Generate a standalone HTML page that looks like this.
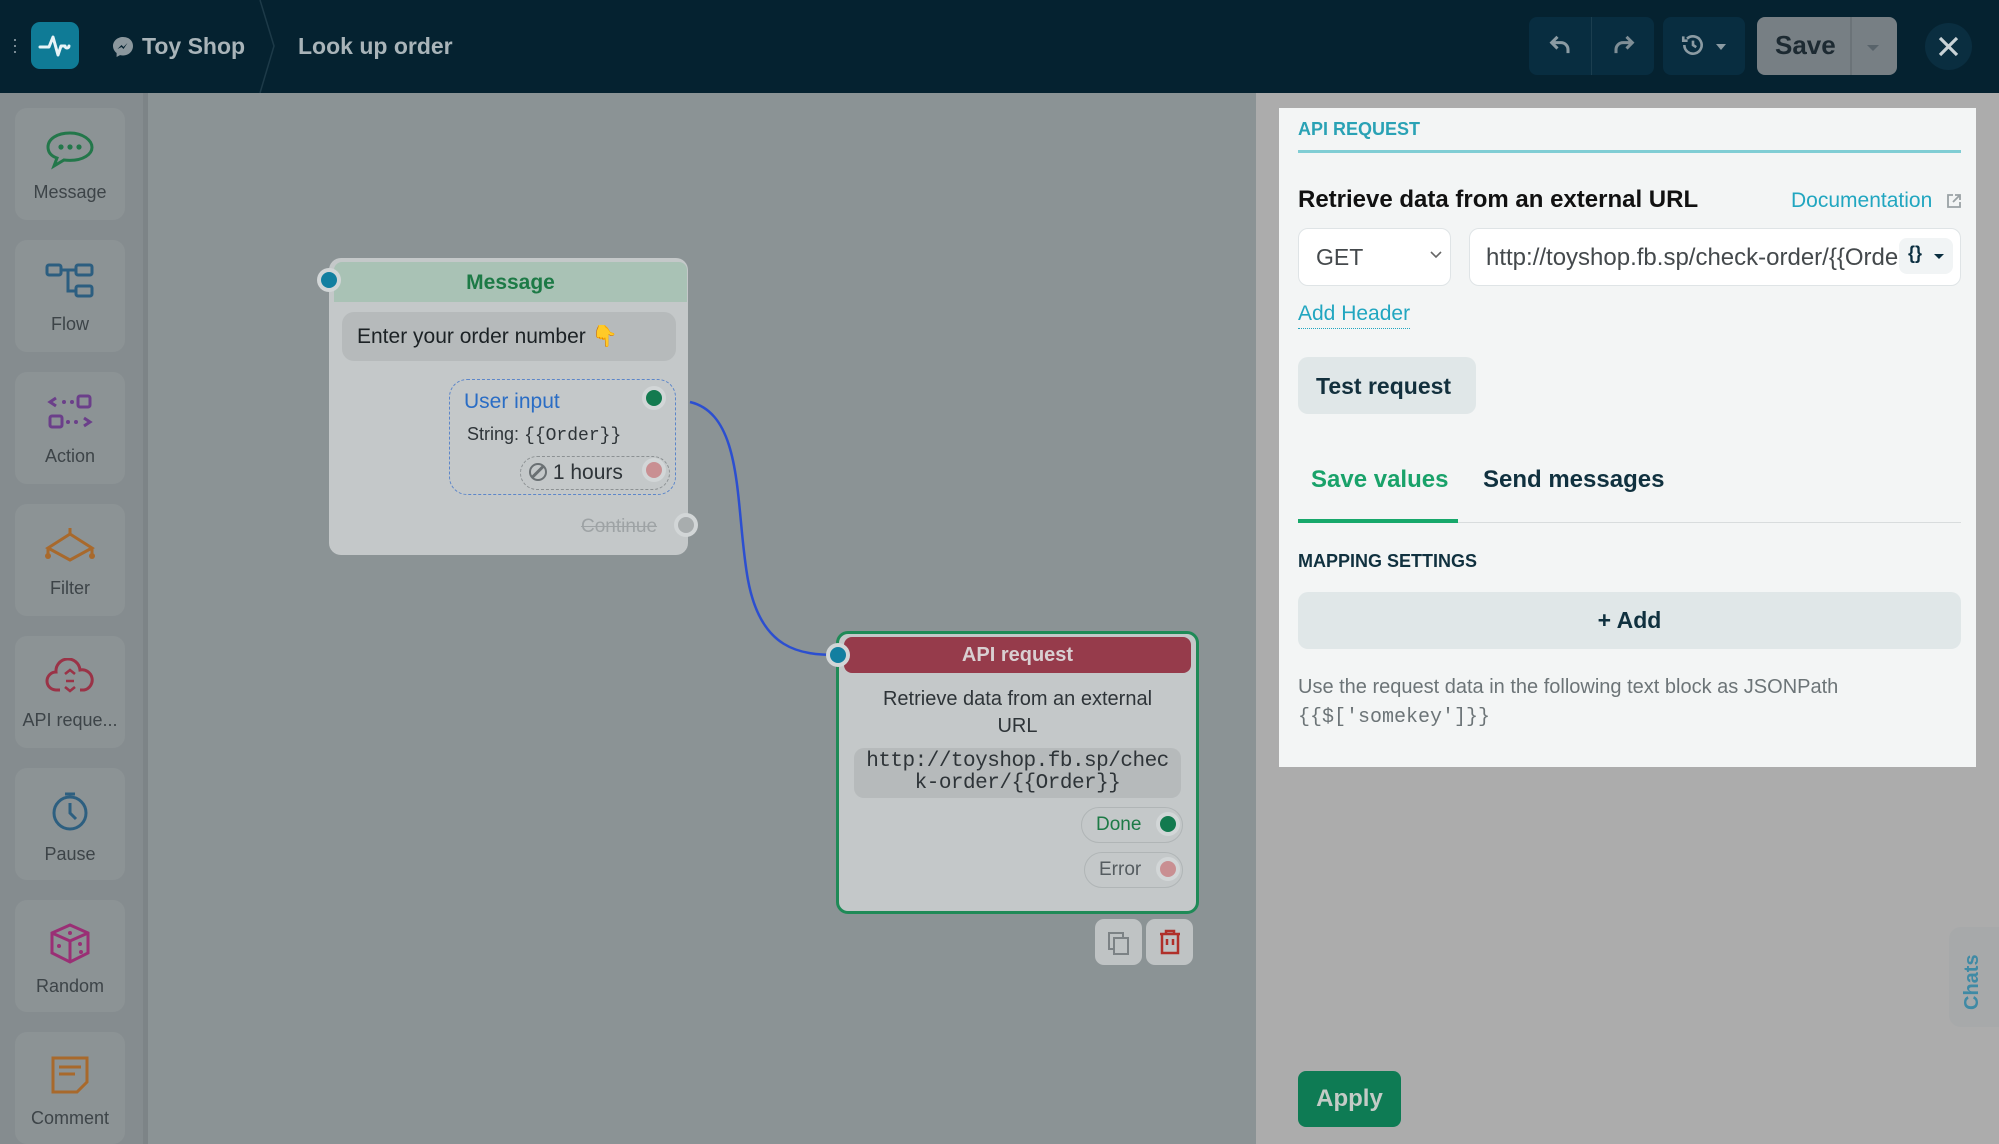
<!DOCTYPE html>
<html><head><meta charset="utf-8"><style>
*{box-sizing:border-box;margin:0;padding:0}
body{width:1999px;height:1144px;overflow:hidden;position:relative;font-family:"Liberation Sans",sans-serif;background:#8b9395}
.abs{position:absolute}
.hdr{left:0;top:0;width:1999px;height:93px;background:#052230}
.side{left:0;top:93px;width:148px;height:1051px;background:#858c8f;border-right:5px solid #7d8487}
.card{position:absolute;left:15px;width:110px;height:112px;background:#8c9395;border-radius:12px;text-align:center;color:#3d4448;font-size:18px}
.card svg{display:block;margin:22px auto 12px}
.node{background:#c4c8c9;border-radius:12px}
.port{position:absolute;width:24px;height:24px;border-radius:50%;background:#d2d6d7}
.port i{position:absolute;left:4px;top:4px;width:16px;height:16px;border-radius:50%}
.pill{position:absolute;border:1px solid #b0b5b6;border-radius:18px;font-size:19px;padding:6px 0 0 14px}
</style></head><body>
<div class="abs hdr"></div>
<div class="abs" style="left:12px;top:36px;color:#8a9aa3;font-size:18px;line-height:6px">·<br>·<br>·</div>
<div class="abs" style="left:31px;top:22px;width:48px;height:47px;border-radius:9px;background:#0f7b96">
<svg width="48" height="47" viewBox="0 0 48 47"><path d="M9 25h9l4-10 5 18 3-9 h4 a2 2 0 1 0 4 0" fill="none" stroke="#e8f4f7" stroke-width="3" stroke-linejoin="round" stroke-linecap="round"/></svg></div>
<svg class="abs" style="left:111px;top:35px" width="24" height="24" viewBox="0 0 24 24"><path d="M12 2C6.5 2 2 6 2 11c0 2.8 1.4 5.3 3.6 7V22l3.4-1.9c1 .3 2 .4 3 .4 5.5 0 10-4 10-9.5S17.5 2 12 2z" fill="#8b979d"/><path d="M6.5 14l4-4 2 2 4-4-4 6-2-2z" fill="#052230"/></svg>
<div class="abs" style="left:142px;top:33px;color:#a9b4b9;font-size:23px;font-weight:bold">Toy Shop</div>
<svg class="abs" style="left:258px;top:0" width="20" height="93"><path d="M2 0 L16 46 L2 93" stroke="#1d3a48" stroke-width="1.5" fill="none"/></svg>
<div class="abs" style="left:298px;top:33px;color:#a9b4b9;font-size:23px;font-weight:bold">Look up order</div>
<div class="abs" style="left:1529px;top:17px;width:125px;height:58px;background:#082d40;border-radius:8px"></div>
<div class="abs" style="left:1591px;top:17px;width:1px;height:58px;background:#1b3e4f"></div>
<svg class="abs" style="left:1547px;top:31px" width="28" height="28" viewBox="0 0 24 24"><path d="M9 5L4 10l5 5M4 10h8a6 6 0 0 1 6 6v3" fill="none" stroke="#8b9ba3" stroke-width="2.6"/></svg>
<svg class="abs" style="left:1609px;top:31px" width="28" height="28" viewBox="0 0 24 24"><path d="M15 5l5 5-5 5M20 10h-8a6 6 0 0 0-6 6v3" fill="none" stroke="#7f8e96" stroke-width="2.6"/></svg>
<div class="abs" style="left:1663px;top:17px;width:82px;height:58px;background:#082d40;border-radius:8px"></div>
<svg class="abs" style="left:1680px;top:32px" width="26" height="26" viewBox="0 0 24 24"><path d="M4 12a8 8 0 1 0 2.5-5.8M3 4v4h4M12 8v4l3 2" fill="none" stroke="#8b9ba3" stroke-width="2.4"/></svg>
<div class="abs" style="left:1716px;top:44px;border:5px solid transparent;border-top:6px solid #8b9ba3"></div>
<div class="abs" style="left:1757px;top:17px;width:140px;height:58px;background:#777f84;border-radius:8px"></div>
<div class="abs" style="left:1850px;top:17px;width:2px;height:58px;background:#6b7378"></div>
<div class="abs" style="left:1775px;top:30px;color:#1d2a32;font-size:26px;font-weight:bold">Save</div>
<div class="abs" style="left:1867px;top:45px;border:6px solid transparent;border-top:6px solid #58636a"></div>
<div class="abs" style="left:1925px;top:23px;width:47px;height:47px;border-radius:50%;background:#0a2e40"></div>
<svg class="abs" style="left:1936px;top:34px" width="25" height="25"><path d="M4 4L21 21M21 4L4 21" stroke="#c9d2d6" stroke-width="3.2"/></svg>

<div class="abs side"></div>
<div class="card" style="top:108px"><svg width="52" height="40" viewBox="0 0 52 40"><path d="M26 3C13 3 4 9 4 17c0 5 3 9 9 11l-3 8 10-6c2 .3 4 .4 6 .4 13 0 22-6 22-13S39 3 26 3z" fill="none" stroke="#23774a" stroke-width="3"/><circle cx="17" cy="17" r="2.6" fill="#23774a"/><circle cx="26" cy="17" r="2.6" fill="#23774a"/><circle cx="35" cy="17" r="2.6" fill="#23774a"/></svg>Message</div>
<div class="card" style="top:240px"><svg width="52" height="40" viewBox="0 0 52 40"><rect x="3" y="3" width="14" height="10" rx="2" fill="none" stroke="#2c5e80" stroke-width="3"/><rect x="32" y="3" width="16" height="10" rx="2" fill="none" stroke="#2c5e80" stroke-width="3"/><rect x="32" y="24" width="16" height="10" rx="2" fill="none" stroke="#2c5e80" stroke-width="3"/><path d="M17 8h15M24 8v21h8" fill="none" stroke="#2c5e80" stroke-width="3"/></svg>Flow</div>
<div class="card" style="top:372px"><svg width="52" height="40" viewBox="0 0 52 40"><path d="M12 4L6 8l6 4" fill="none" stroke="#6b3f8a" stroke-width="3"/><circle cx="20" cy="8" r="2" fill="#6b3f8a"/><circle cx="28" cy="8" r="2" fill="#6b3f8a"/><rect x="34" y="2" width="12" height="11" rx="2" fill="none" stroke="#6b3f8a" stroke-width="3"/><rect x="6" y="22" width="12" height="11" rx="2" fill="none" stroke="#6b3f8a" stroke-width="3"/><circle cx="24" cy="28" r="2" fill="#6b3f8a"/><circle cx="32" cy="28" r="2" fill="#6b3f8a"/><path d="M40 24l6 4-6 4" fill="none" stroke="#6b3f8a" stroke-width="3"/></svg>Action</div>
<div class="card" style="top:504px"><svg width="60" height="40" viewBox="0 0 60 40"><path d="M30 2v6M30 8L8 22 30 34 52 22zM8 22v8M52 22v8" fill="none" stroke="#a8692c" stroke-width="3"/><circle cx="8" cy="30" r="3" fill="#a8692c"/><circle cx="52" cy="30" r="3" fill="#a8692c"/></svg>Filter</div>
<div class="card" style="top:636px"><svg width="52" height="40" viewBox="0 0 52 40"><path d="M16 32h-4a9 9 0 0 1 0-18 12 12 0 0 1 24-2 9 9 0 0 1 4 20h-4" fill="none" stroke="#9a3347" stroke-width="3"/><path d="M21 16l5-4 5 4M22 23h8M21 29l5 4 5-4" fill="none" stroke="#9a3347" stroke-width="2.6"/></svg>API reque...</div>
<div class="card" style="top:768px"><svg width="52" height="42" viewBox="0 0 52 42"><circle cx="26" cy="23" r="16" fill="none" stroke="#2d5f80" stroke-width="3"/><path d="M21 4h10M26 13v10l6 6" fill="none" stroke="#2d5f80" stroke-width="3"/></svg>Pause</div>
<div class="card" style="top:900px"><svg width="52" height="42" viewBox="0 0 52 42"><path d="M26 3L44 11v20L26 40 8 31V11zM8 11l18 8 18-8M26 19v21" fill="none" stroke="#9a2f75" stroke-width="3"/><circle cx="26" cy="11" r="2" fill="#9a2f75"/><circle cx="15" cy="24" r="2" fill="#9a2f75"/><circle cx="36" cy="22" r="2" fill="#9a2f75"/><circle cx="37" cy="30" r="2" fill="#9a2f75"/></svg>Random</div>
<div class="card" style="top:1032px"><svg width="52" height="42" viewBox="0 0 52 42"><path d="M9 4h34v24l-10 10H9z" fill="none" stroke="#a8692c" stroke-width="3"/><path d="M15 13h22M15 20h16" stroke="#a8692c" stroke-width="3"/></svg>Comment</div>

<svg class="abs" style="left:0;top:0" width="1256" height="1144"><path d="M690 402 C 745 415, 735 510, 748 580 S 800 655, 838 655" fill="none" stroke="#2c4fd0" stroke-width="2.5"/></svg>

<div class="abs node" style="left:329px;top:258px;width:359px;height:297px"></div>
<div class="abs" style="left:334px;top:262px;width:353px;height:40px;background:#a9c2b5;border-radius:8px 8px 0 0;text-align:center;color:#1d7a46;font-size:21px;font-weight:bold;padding-top:9px">Message</div>
<div class="port" style="left:317px;top:268px"><i style="background:#127fa0"></i></div>
<div class="abs" style="left:342px;top:312px;width:334px;height:49px;background:#b6babb;border-radius:12px;font-size:21px;color:#1c2225;padding:13px 15px">Enter your order number <span style="color:#c9a23a">👇</span></div>
<div class="abs" style="left:449px;top:379px;width:227px;height:116px;border:1px dashed #5c86c9;border-radius:18px"></div>
<div class="abs" style="left:464px;top:390px;color:#2a6dc5;font-size:21px">User input</div>
<div class="abs" style="left:467px;top:424px;color:#2e3438;font-size:18px">String: <span style="font-family:'Liberation Mono',monospace">{{Order}}</span></div>
<div class="abs" style="left:520px;top:456px;width:150px;height:34px;border:1px dashed #8c9193;border-radius:17px"></div>
<div class="abs" style="left:529px;top:461px;color:#2e3438;font-size:21px"><span style="display:inline-block;width:18px;height:18px;border:2.5px solid #6a7073;border-radius:50%;vertical-align:-2px;position:relative"><span style="position:absolute;left:5px;top:-1px;width:2.5px;height:16px;background:#6a7073;transform:rotate(45deg)"></span></span> 1 hours</div>
<div class="port" style="left:642px;top:386px"><i style="background:#137a4f"></i></div>
<div class="port" style="left:642px;top:458px"><i style="background:#c98f92"></i></div>
<div class="abs" style="left:581px;top:516px;color:#9ea3a5;font-size:19px;text-decoration:line-through">Continue</div>
<div class="port" style="left:674px;top:513px"><i style="background:#a8adae"></i></div>

<div class="abs node" style="left:836px;top:631px;width:363px;height:283px;border:3px solid #1f8a57"></div>
<div class="abs" style="left:844px;top:637px;width:347px;height:36px;background:#963b4b;border-radius:8px;text-align:center;color:#d9cfd1;font-size:20px;font-weight:bold;padding-top:7px">API request</div>
<div class="port" style="left:826px;top:643px"><i style="background:#127fa0"></i></div>
<div class="abs" style="left:844px;top:686px;width:347px;text-align:center;color:#2e3438;font-size:20px;line-height:27px">Retrieve data from an external<br>URL</div>
<div class="abs" style="left:854px;top:748px;width:327px;height:50px;background:#b6babb;border-radius:10px;text-align:center;font-family:'Liberation Mono',monospace;font-size:21px;color:#2e3438;line-height:22px;padding-top:3px;letter-spacing:-0.5px">http://toyshop.fb.sp/chec<br>k-order/{{Order}}</div>
<div class="pill" style="left:1081px;top:807px;width:102px;height:36px;color:#1d7a46">Done</div>
<div class="port" style="left:1156px;top:812px"><i style="background:#137a4f"></i></div>
<div class="pill" style="left:1084px;top:852px;width:99px;height:36px;color:#555c60">Error</div>
<div class="port" style="left:1156px;top:857px"><i style="background:#c98f92"></i></div>
<div class="abs" style="left:1095px;top:919px;width:47px;height:46px;background:#bfc3c4;border-radius:9px"></div>
<svg class="abs" style="left:1106px;top:930px" width="26" height="26"><rect x="3" y="3" width="14" height="16" fill="none" stroke="#7c8285" stroke-width="2"/><rect x="8" y="8" width="14" height="16" fill="#bfc3c4" stroke="#7c8285" stroke-width="2"/></svg>
<div class="abs" style="left:1146px;top:919px;width:47px;height:46px;background:#bfc3c4;border-radius:9px"></div>
<svg class="abs" style="left:1157px;top:929px" width="26" height="26"><path d="M3 5h20M9 5V2h8v3M5 5v19h16V5" fill="none" stroke="#b0302a" stroke-width="2.5"/><path d="M10 10v6M16 10v6" stroke="#b0302a" stroke-width="2.5"/></svg>

<div class="abs" style="left:1256px;top:93px;width:743px;height:1051px;background:#acacac"></div>
<div class="abs" style="left:1279px;top:108px;width:697px;height:659px;background:#f3f5f5"></div>
<div class="abs" style="left:1298px;top:119px;color:#2aa2b5;font-size:18px;font-weight:bold">API REQUEST</div>
<div class="abs" style="left:1298px;top:150px;width:663px;height:3px;background:#80cdd4"></div>
<div class="abs" style="left:1298px;top:186px;color:#111;font-size:24px;font-weight:bold">Retrieve data from an external URL</div>
<div class="abs" style="left:1791px;top:189px;color:#21a6c0;font-size:21px">Documentation</div>
<svg class="abs" style="left:1946px;top:193px" width="16" height="16"><path d="M7 2H2v12h12V9M9 2h5v5M14 2L7 9" fill="none" stroke="#9aa2a5" stroke-width="1.8"/></svg>
<div class="abs" style="left:1298px;top:228px;width:153px;height:58px;background:#fff;border:1px solid #dfe4e6;border-radius:10px;color:#44494c;font-size:23px;padding:15px 0 0 17px">GET</div>
<svg class="abs" style="left:1429px;top:250px" width="14" height="10"><path d="M2 2l5 5 5-5" fill="none" stroke="#666" stroke-width="1.6"/></svg>
<div class="abs" style="left:1469px;top:228px;width:492px;height:58px;background:#fff;border:1px solid #dfe4e6;border-radius:10px;color:#44494c;font-size:24px;padding:15px 0 0 16px;overflow:hidden;white-space:nowrap"><span style="display:inline-block;width:432px;overflow:hidden">http://toyshop.fb.sp/check-order/{{Order}}</span></div>
<div class="abs" style="left:1899px;top:238px;width:54px;height:36px;background:#f1f4f5;border-radius:8px;color:#0a2e40;font-size:18px;font-weight:bold;padding:5px 0 0 9px">{}</div>
<div class="abs" style="left:1934px;top:254px;border:5px solid transparent;border-top:5px solid #0a2e40"></div>
<div class="abs" style="left:1298px;top:302px;color:#21a6c0;font-size:21px;border-bottom:1px dotted #21a6c0;padding-bottom:2px">Add Header</div>
<div class="abs" style="left:1298px;top:357px;width:178px;height:57px;background:#e0e7e8;border-radius:10px;color:#13303d;font-size:23px;font-weight:bold;padding:16px 0 0 18px">Test request</div>
<div class="abs" style="left:1311px;top:466px;color:#19a26a;font-size:24px;font-weight:bold">Save values</div>
<div class="abs" style="left:1483px;top:466px;color:#10313f;font-size:24px;font-weight:bold">Send messages</div>
<div class="abs" style="left:1298px;top:522px;width:663px;height:1px;background:#d8dcdd"></div>
<div class="abs" style="left:1298px;top:519px;width:160px;height:4px;background:#17a86b"></div>
<div class="abs" style="left:1298px;top:551px;color:#10313f;font-size:18px;font-weight:bold">MAPPING SETTINGS</div>
<div class="abs" style="left:1298px;top:592px;width:663px;height:57px;background:#e0e7e8;border-radius:10px;text-align:center;color:#10313f;font-size:23px;font-weight:bold;padding-top:15px">+ Add</div>
<div class="abs" style="left:1298px;top:676px;color:#6c7477;font-size:20px">Use the request data in the following text block as JSONPath</div>
<div class="abs" style="left:1298px;top:706px;color:#6c7477;font-size:20px;font-family:'Liberation Mono',monospace">{{$['somekey']}}</div>
<div class="abs" style="left:1298px;top:1071px;width:103px;height:56px;background:#0e7b54;border-radius:8px;color:#c3cbc6;font-size:24px;font-weight:bold;text-align:center;padding-top:14px">Apply</div>
<div class="abs" style="left:1949px;top:927px;width:55px;height:100px;background:#a7a9aa;border-radius:12px 0 0 12px"></div>
<div class="abs" style="left:1961px;top:1010px;color:#3f8aa5;font-size:20px;font-weight:bold;transform:rotate(-90deg);transform-origin:0 0">Chats</div>
</body></html>
